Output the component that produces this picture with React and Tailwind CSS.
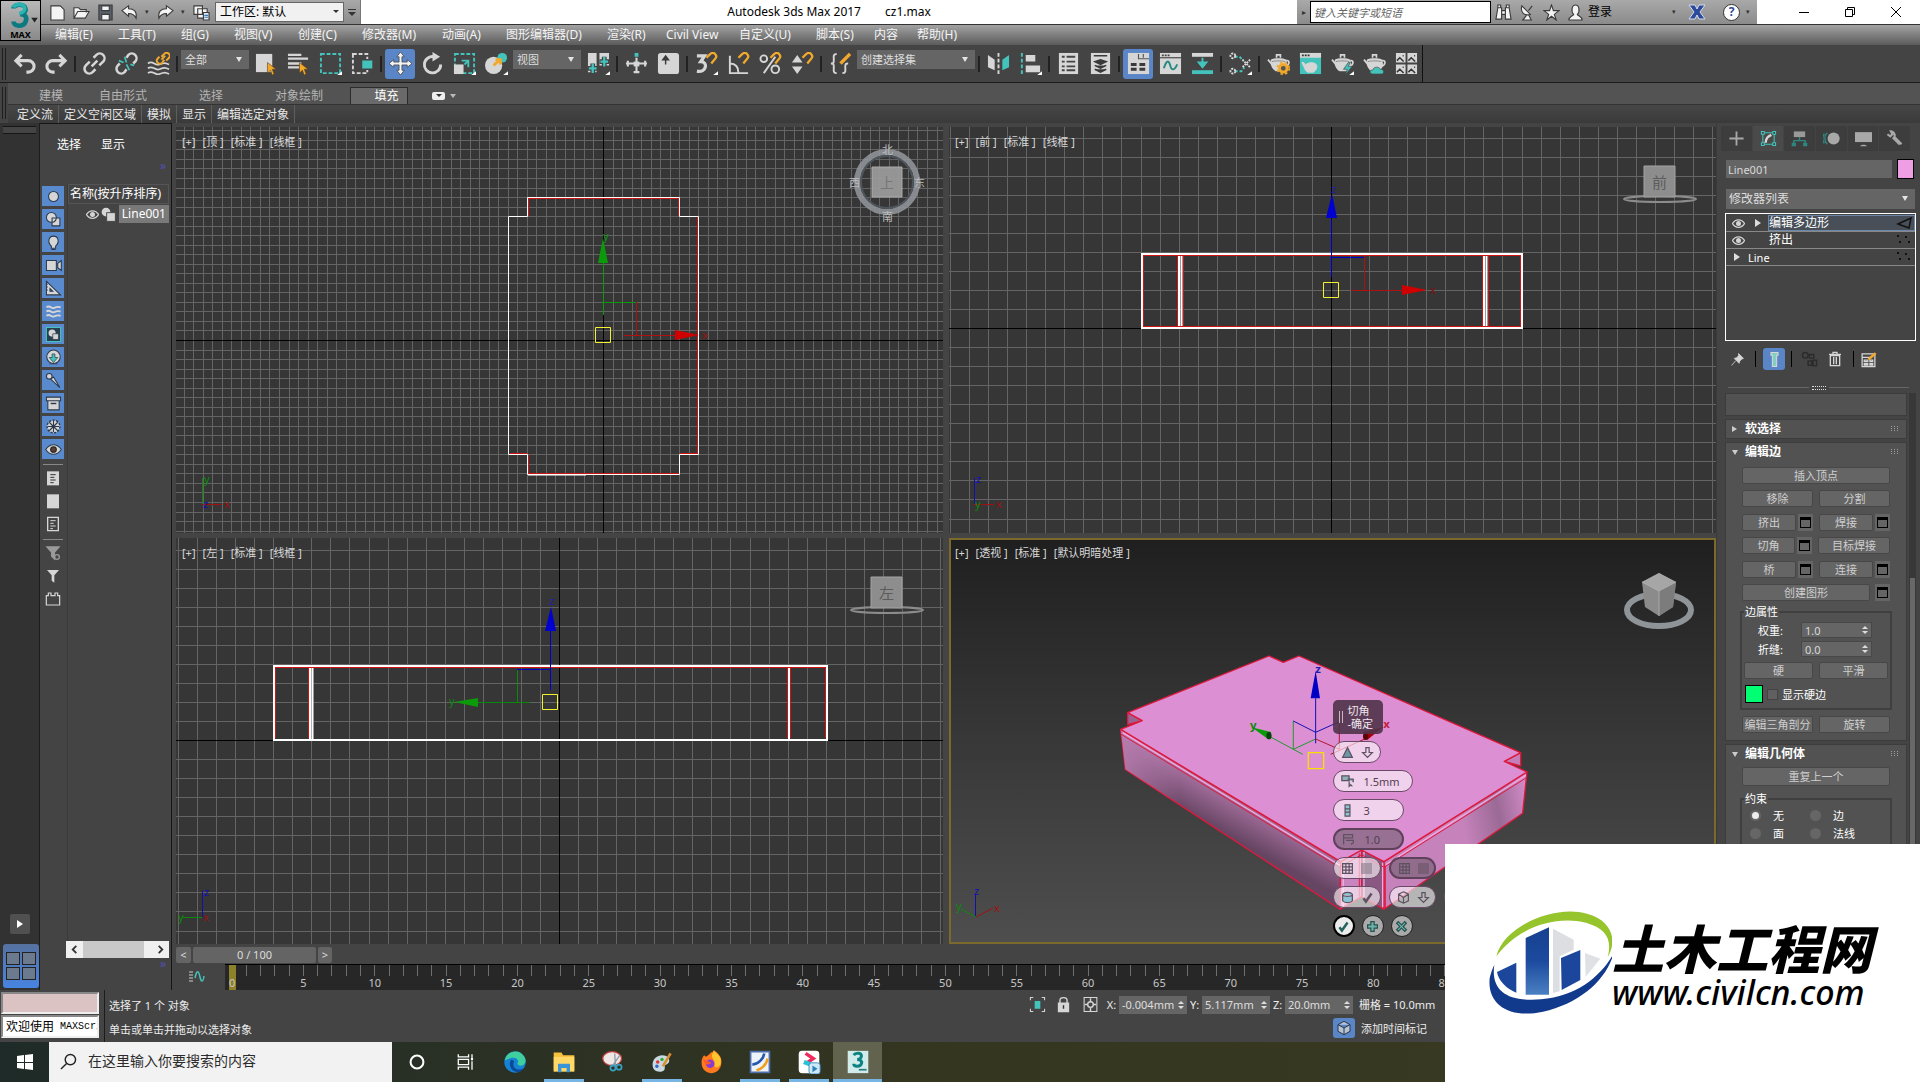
import React from "react";

const L = "#d6d6d6";
const T = "#43c3bb";
const Y = "#f0a92c";

function Ic({ children, className = "size-6" }) {
  return (
    <svg viewBox="0 0 24 24" className={className + " shrink-0"} fill="none" stroke={L} strokeWidth="2" aria-hidden="true">
      {children}
    </svg>
  );
}

const cursor = <path d="M13 11v11l3-3 2 5 2-1-2-5h4z" fill={Y} stroke="#5a3c10" strokeWidth=".6" />;
const teapot = (
  <g>
    <path d="M4 8c3-2 13-2 16 0 2 6 0 10-4 12H9C5 18 3 13 4 8z" fill={L} stroke="none" />
    <path d="M10 6V3h4v3M1 8l5 6M20 9c4-1 4 5-1 6" strokeWidth="1.800" />
    <path d="M5 10c3-1 11-1 14 0" stroke="#777" strokeWidth=".8" />
  </g>
);
const fold = <path d="M24 20v4h-5z" fill="#fff" stroke="none" />;

const toolIcons = {
  undo: <path d="M9 3 3 9l6 6M3 9h13a6 6 0 0 1 0 12h-2" strokeWidth="3.200" />,
  redo: <path d="m15 3 6 6-6 6M21 9H8a6 6 0 0 0 0 12h2" strokeWidth="3.200" />,
  link: <path d="m9 15 6-6M11 6l3-3a4.500 4.500 0 0 1 7 7l-4 4M13 18l-3 3a4.500 4.500 0 0 1-7-7l4-4" strokeWidth="2.600" />,
  unlink: (
    <>
      <path d="M12 6l2-3a4.500 4.500 0 0 1 7 7l-2 2M12 18l-2 3a4.500 4.500 0 0 1-7-7l2-2" strokeWidth="2.600" />
      <path d="m10 5 2 6M12 13l3 6M16 13l4 1M4 9l5 2" stroke={T} strokeWidth="1.800" />
    </>
  ),
  bind: (
    <>
      <path d="M1 12c5-4 7 3 12 1s6-2 10 0M1 17c5-4 7 3 12 1s6-2 10 0M1 22c5-4 7 3 12 1s6-2 10 0" strokeWidth="1.800" />
      <path d="m15 8 4-4M15 5l3-3a3 3 0 0 1 5 4l-3 3M18 8l-2 3a3 3 0 0 1-5-4l2-2" stroke={Y} />
    </>
  ),
  select: (
    <>
      <path d="M1 2h17v19H1z" fill={L} stroke="none" />
      {cursor}
    </>
  ),
  byName: (
    <>
      <path d="M1 3h14M1 7h21M1 12h14M1 16h12" strokeWidth="2.400" />
      {cursor}
    </>
  ),
  rect: (
    <>
      <path d="M2 2h20v20H2z" stroke={T} strokeDasharray="4 2" />
      {fold}
    </>
  ),
  crossing: (
    <>
      <path d="M2 2h15v20H2z" strokeDasharray="4 2" />
      <path d="M11 8h12v10H11z" fill={T} stroke="#444" strokeWidth="1.500" />
    </>
  ),
  move: (
    <g fill="#f2f2f2" stroke="#444" strokeWidth=".8">
      <path d="M12 0l4 5h-2.500v5.500H19V8l5 4-5 4v-2.500h-5.500V19H16l-4 5-4-5h2.500v-5.500H5V16l-5-4 5-4v2.500h5.500V5H8z" />
    </g>
  ),
  rotate: (
    <>
      <path d="M14 5a8.500 8.500 0 1 0 6.500 8" strokeWidth="3" />
      <path d="M12 0v10l8-5z" fill={L} stroke="none" />
    </>
  ),
  scale: (
    <>
      <path d="M2 2h20v20H2z" stroke={T} strokeDasharray="4 2" />
      <path d="M1 13h10v10H1z" fill={L} stroke="none" />
      <path d="M9 9h7v7M16 9l-4 4" stroke={T} />
      {fold}
    </>
  ),
  place: (
    <>
      <circle cx="9" cy="14" r="9" fill={L} stroke="none" />
      <circle cx="18" cy="6" r="5" fill={T} stroke="none" />
      <path d="m9 14 6-6m-4 0h5v5" stroke={Y} strokeWidth="3" />
      {fold}
    </>
  ),
  pivot: (
    <>
      <path d="M1 1h9v20H1zM13 1h10v13H13z" fill={L} stroke="none" />
      <path d="M6 12v11M1 17h10M18 5v11M13 10h10" stroke="#444" strokeWidth="5" />
      <path d="M6 12v10M2 17h8M18 5v10M14 10h8" stroke={T} strokeWidth="2.400" />
      {fold}
    </>
  ),
  manip: (
    <>
      <path d="M12 6v16M1 12h22M3 9v6M21 9v6M9 21h6" strokeWidth="2.200" />
      <path d="M10 1h4v4h-4z" fill={T} stroke="none" />
      <path d="M9 10h6v5H9z" fill={L} stroke="none" />
    </>
  ),
  keyboard: (
    <>
      <rect x="1" y="1" width="22" height="22" rx="3" fill={L} stroke="none" />
      <path d="M9 13V8M6 8h6L9 4z" stroke="#3a3a3a" strokeWidth="1.500" fill="#3a3a3a" />
    </>
  ),
  snap: (
    <>
      <path d="M2 4h8l-4 6c8 0 6 12-4 10" strokeWidth="3.400" />
      <path d="m12 6 4-4c4-3 8 2 5 5l-4 5" stroke={Y} strokeWidth="2.400" />
      {fold}
    </>
  ),
  angle: (
    <>
      <path d="M3 4v18h19M3 12c7 0 9 4 9 10" />
      <path d="m12 6 4-4c4-3 8 2 5 5l-4 5" stroke={Y} strokeWidth="2.400" />
    </>
  ),
  percent: (
    <>
      <circle cx="5" cy="7" r="3.500" />
      <circle cx="17" cy="18" r="4" />
      <path d="M17 5 5 22" />
      <path d="m12 6 4-4c4-3 8 2 5 5l-4 5" stroke={Y} strokeWidth="2.400" />
    </>
  ),
  spinner: (
    <>
      <path d="M1 11h11L6.500 3zM1 15h11l-5.500 8z" fill={L} stroke="none" />
      <path d="m12 6 4-4c4-3 8 2 5 5l-4 5" stroke={Y} strokeWidth="2.400" />
    </>
  ),
  braces: (
    <>
      <path d="M8 2C4 2 5 5 5 8s0 4-3 4c3 0 3 1 3 4s-1 6 3 6M14 22c4 0 3-3 3-6s0-4 3-4" />
      <path d="M12 12 22 2" stroke={Y} strokeWidth="3.500" />
    </>
  ),
  mirror: (
    <>
      <path d="M1 3l7 5v11l-7-3z" fill={L} stroke="none" />
      <path d="M23 3l-7 5v11l7-3z" fill={T} stroke="none" />
      <path d="M12 1v22" strokeDasharray="4 2" />
    </>
  ),
  align: (
    <>
      <path d="M3 1v22" stroke={T} strokeDasharray="4 2" />
      <path d="M7 3h10v7H7zM7 14h15v7H7z" fill={L} stroke="none" />
      {fold}
    </>
  ),
  layers: (
    <>
      <path d="M2 1h20v22H2z" fill={L} stroke="none" />
      <path d="M5 5h3M10 5h9M5 10h3M10 10h9M5 15h3M10 15h9M5 19h3M10 19h9" stroke="#444" />
    </>
  ),
  layerStack: (
    <>
      <path d="M2 1h20v22H2z" fill={L} stroke="none" />
      <path d="M5 4h14M6 10l6-2 6 2-6 3zM6 14l6 3 6-3M6 18l6 3 6-3" stroke="#3a3a3a" fill="#3a3a3a" strokeWidth="1.500" />
    </>
  ),
  ribbon: (
    <>
      <path d="M1 1h22v22H1z" fill={L} stroke="none" />
      <path d="M12 2v5h11M17 2v4" stroke="#555" strokeWidth="1.200" />
      <path d="M4 13h6M13 13h6M4 18h6M13 18h6" stroke="#3a3a3a" strokeWidth="3" />
    </>
  ),
  curve: (
    <>
      <path d="M1 1h22v22H1z" fill={L} stroke="none" />
      <path d="M1 6h22" stroke="#444" strokeWidth="1.200" />
      <path d="M3 3.500h8" stroke="#444" strokeDasharray="2 1" />
      <path d="M5 17c4-12 6-6 7-2s4 5 7-2" stroke="#238a84" />
    </>
  ),
  schematic: (
    <>
      <path d="M1 3h22" strokeWidth="4" />
      <path d="M1 21h22" stroke={T} strokeWidth="4" />
      <path d="M12 6v6M8 11h8l-4 5z" stroke={T} fill={T} />
    </>
  ),
  material: (
    <>
      <path d="M6 5h5l4 4M6 20h7l3-4" stroke={T} strokeDasharray="3 2" />
      <circle cx="4" cy="4" r="2.500" strokeDasharray="2 1" />
      <circle cx="4" cy="20" r="2.500" strokeDasharray="2 1" />
      <path d="m14 8 8 8M22 8l-8 8" strokeDasharray="2 1" />
      {fold}
    </>
  ),
  renderSetup: (
    <>
      {teapot}
      <circle cx="17" cy="17" r="4" stroke={Y} strokeWidth="3" fill="#555" />
      <circle cx="17" cy="17" r="6.200" stroke={Y} strokeWidth="1.800" strokeDasharray="2.500 2.500" />
    </>
  ),
  frame: (
    <>
      <path d="M1 1h22v22H1z" fill={T} stroke="none" />
      <path d="M1 1h22v5H1z" fill={L} stroke="none" />
      <path d="M3 3.500h8" stroke="#333" strokeDasharray="2 1" />
      <path d="M3 11h2l2 3c0-3 9-4 11-1s-1 7-3 8H9c-2-1-3-3-4-6z" fill={L} stroke={L} strokeWidth="1" />
    </>
  ),
  render: (
    <>
      {teapot}
      <path d="m18 11-5 7h4l-2 6 7-9h-4l2-4z" fill={T} stroke="#444" strokeWidth=".7" />
      {fold}
    </>
  ),
  cloud: (
    <>
      {teapot}
      <path d="M10 23c-4 0-3-5 0-4 1-4 7-4 8-1 4-1 5 5 1 5z" fill={T} stroke="#444" strokeWidth=".7" />
    </>
  ),
  gallery: (
    <>
      <path d="M1 1h10v10H1zM13 1h10v10H13zM1 13h10v10H1zM13 13h10v10H13z" fill={L} stroke="none" />
      <path d="m2 9 3-3 4 4M14 9l3-3 4 4M2 21l3-3 4 4M14 21l3-3 4 4M8 4h1M20 4h1M8 16h1M20 16h1" stroke="#333" strokeWidth="1.500" />
    </>
  ),
};

const toolbar = [
  "undo", "redo", "|", "link", "unlink", "bind", "|", { label: "选择过滤器", value: "全部", w: "w-[70px]" },
  "select", "byName", "rect", "crossing", "|", "move", "rotate", "scale", "place",
  { label: "参考坐标系", value: "视图", w: "w-[70px]" }, "pivot", "|", "manip", "keyboard", "|",
  "snap", "angle", "percent", "spinner", "|", "braces", { label: "命名选择集", value: "创建选择集", w: "w-[120px]" }, "|",
  "mirror", "align", "|", "layers", "layerStack", "|", "ribbon", "curve", "schematic", "|", "material", "|",
  "renderSetup", "frame", "render", "cloud", "gallery",
];

function Dropdown({ label, value, className }) {
  return (
    <div className={"relative " + className}>
      <select aria-label={label} className="block h-full w-full appearance-none bg-[#656565] px-1 text-[11px] leading-none text-[#dedede]">
        <option>{value}</option>
      </select>
      <span className="pointer-events-none absolute right-[7px] top-[7px] border-x-[3px] border-t-[5px] border-x-transparent border-t-[#e4e4e4]" />
    </div>
  );
}

function Toolbar() {
  return (
    <div className="flex h-[38px] items-center border-b border-[#1c1c1c] bg-[#444444]">
      <div className="flex h-full items-center border-r border-[#111]">
        <span className="mr-[2px] ml-[2px] h-8 w-[4px] border-x border-[#1f1f1f]" />
        {toolbar.map((t, i) => {
          if (t === "|") return <span key={i} className="mx-[2px] h-4 w-[2px] bg-[#222]" />;
          if (typeof t === "object")
            return (
              <div key={i} className={"flex h-full shrink-0 justify-center px-px pt-[5px] " + t.w}>
                <Dropdown label={t.label} value={t.value} className="h-[19px] w-full" />
              </div>
            );
          const on = t === "move" || t === "ribbon";
          return (
            <button
              key={i}
              aria-label={t}
              aria-pressed={on}
              className={"mx-px flex h-[30px] w-[30px] shrink-0 items-center justify-center rounded-[3px] " + (on ? "bg-[#5a86c8]" : "")}
            >
              <Ic className="size-[23px]">{toolIcons[t]}</Ic>
            </button>
          );
        })}
      </div>
    </div>
  );
}

const menus = [
  ["编辑(E)", "w-[63px]"],
  ["工具(T)", "w-[63px]"],
  ["组(G)", "w-[53px]"],
  ["视图(V)", "w-16"],
  ["创建(C)", "w-16"],
  ["修改器(M)", "w-20"],
  ["动画(A)", "w-16"],
  ["图形编辑器(D)", "w-[101px]"],
  ["渲染(R)", "w-[59px]"],
  ["Civil View", "w-[73px]"],
  ["自定义(U)", "w-[77px]"],
  ["脚本(S)", "w-[58px]"],
  ["内容", "w-[43px]"],
  ["帮助(H)", "w-[58px]"],
];

function QuickIcon({ children, label }) {
  return (
    <button aria-label={label} className="flex w-6 justify-center">
      <svg viewBox="0 0 18 18" className="size-[17px]" fill="#f4f4f4" stroke="#3c3c3c" strokeWidth="1.200">{children}</svg>
    </button>
  );
}

function Header() {
  return (
    <header className="flex h-[45px] bg-white">
      <div className="w-[41px] shrink-0 bg-[#5f5f5f]">
        <button aria-label="应用程序菜单" className="flex h-[41px] w-[41px] flex-col items-center border border-black bg-gradient-to-b from-[#b9b9b9] to-[#8a8a8a]">
          <svg viewBox="0 0 40 30" className="h-[28px] w-[40px]" fill="none" aria-hidden="true">
            <path d="M12 8c0-5 13-6 13 1 0 3-3 5-6 5 5 0 8 3 6 8-2 6-13 6-13 0" stroke="#0c7a80" strokeWidth="5" />
            <path d="M12 7c1-4 12-5 12 1 0 3-3 5-6 5" stroke="#2ab5b4" strokeWidth="4" />
            <path d="M31 18h7l-3.500 5z" fill="#222" />
          </svg>
          <span className="text-[9px] font-bold leading-[11px] text-black">MAX</span>
        </button>
      </div>
      <div className="flex min-w-0 flex-1 flex-col">
        <div className="flex h-6 items-stretch">
          <div className="flex w-[320px] shrink-0 items-center border-r border-[#777] bg-gradient-to-b from-[#a9a9a9] to-[#8b8b8b] pl-1">
            <QuickIcon label="新建"><path d="M2 2h10l4 4v11H2z" /></QuickIcon>
            <QuickIcon label="打开"><path d="M1 15V4h5l2 2h6v3M1 15l4-7h12l-4 7z" /></QuickIcon>
            <QuickIcon label="保存"><path d="M2 1h14v16H2z" fill="#59616b" /><path d="M5 2h8v5H5zM5 11h8v6H5z" /></QuickIcon>
            <QuickIcon label="撤消"><path d="M1 7l7-5v3c6 0 9 3 8 10-2-4-4-5-8-5v3z" /></QuickIcon>
            <span className="w-[12px] text-center text-[7px] text-[#333]">▾</span>
            <QuickIcon label="重做"><path d="M17 7l-7-5v3c-6 0-9 3-8 10 2-4 4-5 8-5v3z" /></QuickIcon>
            <span className="w-[12px] text-center text-[7px] text-[#333]">▾</span>
            <QuickIcon label="项目文件夹"><path d="M1 2h9v9H1zM5 5h10v10H5z" /><path d="M11 9h6v8h-6z" fill="#dfe8f2" /><path d="M12 12h4M12 14h4" stroke="#3a7ab5" /></QuickIcon>
            <div className="relative ml-[2px] h-5 w-[129px]">
              <select aria-label="工作区" className="block h-full w-full appearance-none border border-[#666] bg-[#f1f1f1] px-1 text-xs leading-none text-black">
                <option>工作区: 默认</option>
              </select>
              <span className="pointer-events-none absolute right-[5px] top-2 border-x-[3px] border-t-[3px] border-x-transparent border-t-[#333]" />
            </div>
            <button aria-label="自定义快速访问" className="ml-[4px] flex flex-col items-center gap-[2px]">
              <span className="h-px w-2 bg-[#333]" />
              <span className="border-x-4 border-t-4 border-x-transparent border-t-[#333]" />
            </button>
          </div>
          <h1 className="flex min-w-0 flex-1 items-center justify-center gap-6 text-xs text-black">
            <span>Autodesk 3ds Max 2017</span>
            <span>cz1.max</span>
          </h1>
          <div className="flex w-[460px] shrink-0 items-center bg-gradient-to-b from-[#a9a9a9] to-[#8b8b8b]">
            <span className="w-[13px] text-center text-[8px] text-[#333]">▸</span>
            <input aria-label="搜索" placeholder="键入关键字或短语" className="h-[22px] w-[181px] border border-black bg-white px-[3px] text-[11px] italic leading-none placeholder:text-[#666]" />
            <QuickIcon label="搜索"><path d="M3 4h4v12H1zM11 4h4l2 12h-6zM7 7h4v4H7zM3 1h3v3H3zM12 1h3v3h-3z" /></QuickIcon>
            <QuickIcon label="通信中心"><path d="M3 2c-2 7 3 11 9 9zM10 7l4-5M8 12l-4 5h9l-3-6" /></QuickIcon>
            <QuickIcon label="收藏夹"><path d="m9 1 2 6h6l-5 4 2 6-5-4-5 4 2-6-5-4h6z" /></QuickIcon>
            <button className="flex items-center gap-[4px] pl-[4px] text-xs text-black">
              <svg viewBox="0 0 18 18" className="size-[17px]" fill="#f4f4f4" stroke="#3c3c3c" strokeWidth="1.200" aria-hidden="true"><path d="M2 17c0-4 4-4 5-6-3-3-2-10 2-10s5 7 2 10c1 2 5 2 5 6z" /></svg>
              登录
            </button>
            <span className="ml-[60px] text-[7px] text-[#333]">▾</span>
            <button aria-label="Exchange" className="ml-[11px] w-6">
              <svg viewBox="0 0 20 18" className="h-[18px] w-5" aria-hidden="true"><path d="M2 2h6l2 4 2-4h6l-5 7 5 7h-6l-2-4-2 4H2l5-7z" fill="#2d4a9a" stroke="#d5dcf0" /></svg>
            </button>
            <button aria-label="帮助" className="ml-[12px] flex size-[17px] items-center justify-center rounded-full border border-[#333] bg-white text-[12px] font-bold leading-none text-[#2d4a9a]">?</button>
            <span className="ml-[6px] text-[7px] text-[#333]">▾</span>
          </div>
          <div className="flex w-[163px] shrink-0 items-center justify-between pl-10 pr-[17px]">
            <button aria-label="最小化"><svg viewBox="0 0 14 14" className="size-[14px]"><path d="M2 7.500h10" stroke="#000" /></svg></button>
            <button aria-label="还原"><svg viewBox="0 0 14 14" className="size-[14px]" fill="none" stroke="#000"><path d="M2.500 4.500h7v7h-7zM4.500 4.500v-2h7v7h-2" /></svg></button>
            <button aria-label="关闭"><svg viewBox="0 0 14 14" className="size-[14px]" stroke="#000"><path d="m2 2 10 10M12 2 2 12" /></svg></button>
          </div>
        </div>
        <nav className="flex h-[21px] items-center border-t border-[#333] bg-gradient-to-b from-[#a3a3a3] to-[#5c5c5c] pl-[14px] text-xs text-[#f4f4f4]">
          {menus.map(([m, w]) => (
            <button key={m} className={"shrink-0 whitespace-nowrap text-left leading-none " + w}>{m}</button>
          ))}
        </nav>
      </div>
    </header>
  );
}

function Ribbon() {
  return (
    <div className="flex h-10 bg-[#444]">
      <span className="mx-[2px] my-1 w-[4px] shrink-0 border-x border-[#1f1f1f]" />
      <div className="flex min-w-0 flex-1 flex-col">
        <div role="tablist" className="flex h-[22px] items-stretch border-b border-[#333] bg-[#535353] pt-[4px] text-xs leading-none text-[#b4b4b4]">
          <button role="tab" className="w-[86px]">建模</button>
          <button role="tab" className="w-[58px]">自由形式</button>
          <button role="tab" className="w-[118px]">选择</button>
          <button role="tab" className="w-[58px]">对象绘制</button>
          <span className="w-[22px]" />
          <button role="tab" aria-selected="true" className="w-[58px] whitespace-nowrap border border-b-0 border-[#2c2c2c] bg-[#6a6a6a] pl-[15px] text-white">填充</button>
          <button aria-label="显示面板" className="ml-6 flex items-center gap-[5px]">
            <span className="flex h-[8px] w-[13px] items-center justify-center rounded-[2px] bg-[#eee]"><span className="border-x-[3px] border-t-[3px] border-x-transparent border-t-[#333]" /></span>
            <span className="border-x-[3px] border-t-[4px] border-x-transparent border-t-[#bbb]" />
          </button>
        </div>
        <div className="flex h-[18px] bg-gradient-to-b from-[#474747] to-[#3a3a3a] pl-1 text-xs leading-none text-[#e6e6e6]">
          {["定义流", "定义空闲区域", "模拟", "显示", "编辑选定对象"].map((m) => (
            <button key={m} className="border-r border-[#5e5e5e] px-[5px] pt-[2px]">{m}</button>
          ))}
        </div>
      </div>
    </div>
  );
}

const K = "#2c3a4c";
const explorerIcons = [
  <circle cx="12" cy="12" r="7" fill={L} stroke={K} strokeWidth="1.500" />,
  <g stroke={K} strokeWidth="1.500"><circle cx="9" cy="9" r="7" fill={L} /><path d="M10 10h11v11H10z" fill={L} /><path d="M16 10a7 7 0 0 1-6 6" /></g>,
  <path d="M9 20v-3c-6-5-4-14 3-14s9 9 3 14v3zM9 22h6" fill={L} stroke={K} strokeWidth="1.500" />,
  <path d="M2 5h14v14H2zM18 9l5-4v14l-5-4z" fill={L} stroke={K} strokeWidth="1.500" />,
  <path d="M2 2l20 19H2zM7 12v4h4zM2 6h2M2 10h2M2 14h2" fill={L} fillRule="evenodd" stroke={K} strokeWidth="1.500" />,
  <path d="M2 6c6-4 6 3 11 1s5-2 9-1M2 12c6-4 6 3 11 1s5-2 9-1M2 18c6-4 6 3 11 1s5-2 9-1" stroke={L} strokeWidth="2.600" />,
  <g><path d="M2 2h20v20H2z" fill="#28404e" stroke={T} strokeWidth="1.500" /><circle cx="10" cy="10" r="5" fill={L} stroke="none" /><path d="M11 11h8v8h-8z" fill={L} stroke={K} strokeWidth="1" /></g>,
  <g><circle cx="12" cy="11" r="9.500" fill={L} stroke={K} strokeWidth="1.500" /><path d="M10 7h4v5h4l-6 7-6-7h4zM6 21h12" fill={T} stroke={K} strokeWidth="1" /></g>,
  <g fill={L} stroke={K} strokeWidth="1.500"><path d="m8 10 4-3 9 15z" /><circle cx="6" cy="6" r="4" /></g>,
  <g fill={L} stroke={K} strokeWidth="1.500"><path d="M2 3h20v5H2zM4 8h16v13H4z" /><path d="M8 12h8" strokeWidth="2" /></g>,
  <g stroke={K}><circle cx="12" cy="12" r="9" fill={L} strokeDasharray="3 2" strokeWidth="2" /><path d="M12 4v16M4 12h16M6 6l12 12M18 6 6 18" strokeWidth="1.500" /></g>,
  <g><path d="M1 12c6-9 16-9 22 0-6 9-16 9-22 0z" fill={L} stroke={K} strokeWidth="1.500" /><circle cx="12" cy="12" r="4" fill="#5a4038" stroke="#222" strokeWidth="1.500" /></g>,
];
const explorerTools = [
  <g><path d="M3 2h18v21H3z" fill={L} stroke="none" /><path d="M8 7h8M8 11h6M8 15h8M8 19h5" stroke="#333" strokeWidth="1.500" /></g>,
  <path d="M3 2h18v21H3z" fill={L} stroke="none" />,
  <g><path d="M4 2h16v20H4z" /><path d="M8 7h8M8 11h5M8 15h8M8 19h4" strokeWidth="1.500" /></g>,
];
const explorerFilters = [
  <g stroke="#9a9a9a"><path d="M3 3h18l-7 8v10l-4-4v-6z" fill="#9a9a9a" /><circle cx="18" cy="18" r="3.500" fill="#444" /></g>,
  <path d="M3 3h18l-7 8v11l-4-3v-8z" fill={L} stroke="none" />,
  <path d="M2 7h3V3h4v4h6V3h4v4h3v14H2z" strokeWidth="1.800" />,
];

function Eye({ className = "w-[13px] h-[9px]" }) {
  return (
    <svg viewBox="0 0 26 18" className={className + " shrink-0"} aria-hidden="true">
      <path d="M1 9C7-1 19-1 25 9 19 19 7 19 1 9z" fill="none" stroke="#d4d4d4" strokeWidth="2.500" />
      <circle cx="13" cy="9" r="5" fill="#d4d4d4" />
    </svg>
  );
}

function SceneExplorer() {
  return (
    <aside className="flex w-[132px] shrink-0 flex-col border-r border-t border-[#161616] bg-[#444] text-xs text-white">
      <div className="flex h-[42px] items-center gap-5 pl-[17px]">
        <button>选择</button>
        <button>显示</button>
      </div>
      <button aria-label="更多" className="-mt-[8px] h-4 self-end pr-[5px] text-xs leading-none text-[#5350b8]">»</button>
      <div className="mt-[10px] flex min-h-0 flex-1 gap-[2px]">
        <div className="ml-px flex w-6 shrink-0 flex-col items-center gap-[3px] pt-[2px]">
          {explorerIcons.map((g, i) => (
            <button key={i} aria-label={"显示类型 " + (i + 1)} className="flex h-5 w-[22px] items-center justify-center bg-[#5a8ace]"><Ic className="size-[17px]">{g}</Ic></button>
          ))}
          <span className="mt-[2px] h-px w-5 bg-[#888]" />
          {explorerTools.map((g, i) => (
            <button key={i} aria-label={"选择工具 " + (i + 1)} className="flex h-5 w-[22px] items-center justify-center"><Ic className="size-4">{g}</Ic></button>
          ))}
          <span className="mt-[2px] h-px w-5 bg-[#888]" />
          {explorerFilters.map((g, i) => (
            <button key={i} aria-label={"过滤器 " + (i + 1)} className="flex h-5 w-[22px] items-center justify-center"><Ic className="size-4">{g}</Ic></button>
          ))}
        </div>
        <div className="mr-[2px] flex min-w-0 flex-1 flex-col border-l border-[#3a3a3a]">
          <button className="h-5 truncate border border-[#555] pl-px text-left text-xs leading-none">名称(按升序排序)</button>
          <div className="mt-px flex h-[18px] items-center justify-end gap-[2px]">
            <Eye />
            <Ic className="size-[15px]"><circle cx="8" cy="8" r="7" fill={L} stroke="none" /><path d="M9 9h14v14H9z" fill={L} stroke="#444" strokeWidth="1.500" /></Ic>
            <button className="ml-px h-[18px] bg-[#797979] px-[3px] text-xs leading-none">Line001</button>
          </div>
        </div>
      </div>
      <div className="ml-[26px] mr-[2px] flex h-[17px] items-stretch justify-between bg-[#f0f0f0]">
        <button aria-label="向左滚动" className="w-[17px]"><svg viewBox="0 0 10 10" className="mx-auto size-[9px]" fill="none" stroke="#333" strokeWidth="2"><path d="M7 1 3 5l4 4" /></svg></button>
        <span className="mr-[8px] flex-1 bg-[#c9c9c9]" />
        <button aria-label="向右滚动" className="w-[17px]"><svg viewBox="0 0 10 10" className="mx-auto size-[9px]" fill="none" stroke="#333" strokeWidth="2"><path d="m3 1 4 4-4 4" /></svg></button>
      </div>
      <button aria-label="更多" className="mb-5 h-3 self-end pr-[5px] text-xs leading-none text-[#5350b8]">»</button>
    </aside>
  );
}

/* Grid lines spread outwards from the two world axes. */
function Grid({ ax, ay, step }) {
  const xs = [];
  const ys = [];
  for (let k = -90; k <= 90; k++) {
    const x = Math.round(ax + k * step);
    const y = Math.round(ay + k * step);
    if (k !== 0 && x > 0 && x < 767) xs.push(x);
    if (k !== 0 && y > 0 && y < 406) ys.push(y);
  }
  return (
    <g strokeWidth="1">
      <path stroke="#646464" d={xs.map((x) => `M${x + 0.5} 0V406`).join("") + ys.map((y) => `M0 ${y + 0.5}H767`).join("")} />
      <path stroke="#000" d={`M${ax + 0.5} 0V406M0 ${ay + 0.5}H767`} />
    </g>
  );
}

function Tripod({ x, y, up, upColor, side, sideColor, dir = 1, o, oColor }) {
  return (
    <g fontSize="11" fontFamily="Noto Sans" strokeWidth="1">
      <path d={`M${x + 0.5} ${y}V${y - 26}`} stroke={upColor} />
      <path d={`M${x} ${y + 0.5}H${x + dir * 20}`} stroke={sideColor} />
      <text x={x + 2} y={y - 21} fill={upColor}>{up}</text>
      <text x={x + (dir > 0 ? 22 : -24)} y={y + 4} fill={sideColor}>{side}</text>
      <text x={x + 1} y={y + 4} fill={oColor}>{o}</text>
    </g>
  );
}

function Viewport({ name, shade, active, children }) {
  return (
    <section className="relative min-h-0 min-w-0 overflow-hidden bg-[#363636]">
      <svg viewBox="0 0 767 406" preserveAspectRatio="xMidYMid slice" className="block h-full w-full" fill="none" aria-label={name}>{children}</svg>
      <div className="absolute left-[6px] top-[9px] flex gap-[7px] text-[11px] leading-none text-[#d8d8d8]">
        <button>[+]</button>
        <button>[{name} ]</button>
        <button>[标准 ]</button>
        <button>[{shade} ]</button>
      </div>
      {active}
    </section>
  );
}

function FlatCube({ label }) {
  return (
    <g>
      <ellipse cx="711" cy="72" rx="36" ry="3" stroke="#8c8c8c" strokeWidth="2" />
      <path d="M695 39h31v31h-31z" fill="#8d8d8d" stroke="#a4a4a4" />
      <text x="703" y="61" fontSize="15" fill="#5c5c5c" fontFamily="Noto Sans CJK SC">{label}</text>
    </g>
  );
}

const RED = "#d01414";

function TopView() {
  const d = "M351.500 70.500H503.500V89.500H522.500V327.500H503.500V347.500H351.500V327.500H332.500V89.500H351.500Z";
  return (
    <Viewport name="顶" shade="线框">
      <Grid ax={427} ay={213} step={9.53} />
      <path d={d} stroke="#fff" />
      <path d="M352 71.500H503M521.500 90V327M352 346.500H503M352.500 72V89M502.500 72V89M334 326.500H351M504 326.500H521M352.500 328V346" stroke={RED} />
      <path d="M352 348H410" stroke="#fff" />
      <path d="M427.500 188V136M427.500 175.500H460" stroke="#0a9a0a" />
      <path d="M422 136h10l-5-25z" fill="#0a9a0a" />
      <path d="M460.500 175V208M448 208.500H500" stroke="#b01010" />
      <path d="M499 203v10l24-5z" fill="#d00000" />
      <path d="M419.500 200.500h15v15h-15z" stroke="#f2f230" />
      <text x="427" y="113" fontSize="11" fill="#0a9a0a" fontFamily="Noto Sans">y</text>
      <text x="526" y="212" fontSize="11" fill="#a01010" fontFamily="Noto Sans">x</text>
      <circle cx="711" cy="55" r="30" stroke="#8f9498" strokeWidth="6" opacity=".9" />
      <circle cx="711" cy="55" r="26" stroke="#4e555c" strokeWidth="2" />
      <path d="M696 40h30v30h-30z" fill="#9a9a9a" stroke="#b0b0b0" opacity=".95" />
      <g fontFamily="Noto Sans CJK SC" fill="#bcbcbc" fontSize="11">
        <text x="704" y="61" fontSize="14" fill="#777">上</text>
        <text x="706" y="27">北</text>
        <text x="706" y="94">南</text>
        <text x="673" y="60">西</text>
        <text x="738" y="60">东</text>
      </g>
      <Tripod x={26} y={377} up="y" upColor="#0a8a0a" side="x" sideColor="#a01010" o="z" oColor="#1010b0" />
    </Viewport>
  );
}

function FrontView() {
  return (
    <Viewport name="前" shade="线框">
      <Grid ax={382} ay={201} step={19.05} />
      <path d="M193 127H573V201H193Z" stroke="#fff" strokeWidth="2" />
      <path d="M230 127V201M232.500 127V201M535 127V201M537.500 127V201" stroke="#fff" strokeWidth="2" />
      <path d="M194 128.500H572M194 199.500H572M194.500 128V200M571.500 128V200M228.500 128V200M234.500 128V200M533.500 128V200M539.500 128V200" stroke={RED} />
      <path d="M382.500 150V92M382 130.500H415" stroke="#0000c8" />
      <path d="M377 91h11l-5-24z" fill="#0000d0" />
      <text x="382" y="66" fontSize="11" fill="#2020b0" fontFamily="Noto Sans">z</text>
      <path d="M415.500 130V163M402 163.500H455" stroke="#b01010" />
      <path d="M453 158v10l25-5z" fill="#d00000" />
      <text x="481" y="167" fontSize="11" fill="#801010" fontFamily="Noto Sans">x</text>
      <path d="M374.500 155.500h15v15h-15z" stroke="#f2f230" />
      <FlatCube label="前" />
      <Tripod x={25} y={377} up="z" upColor="#1010b0" side="x" sideColor="#a01010" o="y" oColor="#0a8a0a" />
    </Viewport>
  );
}

function LeftView() {
  return (
    <Viewport name="左" shade="线框">
      <Grid ax={383} ay={202} step={19.05} />
      <path d="M98 128H651V202H98Z" stroke="#fff" strokeWidth="2" />
      <path d="M134 128V202M136.500 128V202M613 128V202" stroke="#fff" strokeWidth="2" />
      <path d="M100 129.500H649M99.500 129V200M649.500 129V200M132.500 129V200M611.500 129V200M614.500 129V200" stroke={RED} />
      <path d="M374.500 152V93M341 131.500H374" stroke="#0000c8" />
      <path d="M369 93h11l-5-24z" fill="#0000d0" />
      <text x="373" y="67" fontSize="11" fill="#2020b0" fontFamily="Noto Sans">z</text>
      <path d="M341.500 132V164M354 164.500H300" stroke="#0a8a0a" />
      <path d="M302 160v9l-24-5z" fill="#0a9a0a" />
      <text x="273" y="167" fontSize="11" fill="#0a8a0a" fontFamily="Noto Sans">y</text>
      <path d="M366.500 156.500h15v15h-15z" stroke="#f2f230" />
      <FlatCube label="左" />
      <Tripod x={26} y={379} up="z" upColor="#1010b0" side="y" sideColor="#0a8a0a" dir={-1} o="x" oColor="#a01010" />
    </Viewport>
  );
}

function Pill({ w, dark, children }) {
  return (
    <button className={"flex h-[22px] items-center gap-[10px] rounded-full pl-[7px] text-[11px] leading-none " + w + (dark ? " border-2 border-[#5b3c56]/90 bg-[#7b6278]/70 text-[#54404f]" : " border border-[#6a4a66] bg-white/60 text-[#54404f]")}>
      {children}
    </button>
  );
}

function G({ children }) {
  return <svg viewBox="0 0 16 16" className="size-[13px] shrink-0" fill="none" stroke="#5d5260" strokeWidth="1.500" aria-hidden="true">{children}</svg>;
}

const downArrow = <G><path d="M6 2h4v6h4l-6 6-6-6h4z" /></G>;
const gridGlyph = <G><path d="M2 2h12v12H2zM2 6h12M2 10h12M6 2v12M10 2v12" /></G>;

function Caddy() {
  return (
    <div className="absolute left-1/2 top-[162px] flex flex-col gap-[7px]">
      <div className="flex h-[34px] w-[50px] items-center gap-[5px] rounded-[5px] bg-[#4f3349]/90 pl-[6px] text-[11px] leading-[13px] text-[#f0e6ee]">
        <span className="h-3 w-[4px] border-x border-[#c7b6c4]" />
        <span>切角<br />-确定</span>
      </div>
      <Pill w="w-[48px]">
        <span className="flex gap-[7px]"><G><path d="M8 2l6 12H2z" fill="#6d97a8" /></G>{downArrow}</span>
      </Pill>
      <Pill w="w-[80px]"><G><path d="M1 1h9v6H1zM8 5h7v4M10 8v6l2-2 2 2" fill="#8fb0bb" /></G>1.5mm</Pill>
      <Pill w="w-[71px]"><G><path d="M5 1h6v14H5zM5 6h6M5 10h6" fill="#8cc6d6" /></G>3</Pill>
      <Pill w="w-[71px]" dark><G><path d="M2 2h11v4H2zM2 6v8M5 9h9v3l-3 2" /></G>1.0</Pill>
      <div className="flex gap-[8px]">
        <Pill w="w-[48px]"><span className="flex items-center gap-[7px]">{gridGlyph}<span className="size-[11px] bg-[#8a7c88]/60" /></span></Pill>
        <Pill w="w-[47px]" dark><span className="flex items-center gap-[7px]">{gridGlyph}<span className="size-[11px] bg-[#6a5568]/60" /></span></Pill>
      </div>
      <div className="flex gap-[8px]">
        <Pill w="w-[48px]"><span className="flex gap-[7px]"><G><path d="M2 4c2-3 10-3 12 0v8c-2 3-10 3-12 0zM2 5c2 2 10 2 12 0" fill="#8cc6d6" /></G><G><path d="m3 9 3 4 7-10" strokeWidth="3" /></G></span></Pill>
        <Pill w="w-[47px]"><span className="flex gap-[7px]"><G><path d="M8 1l6 3v8l-6 3-6-3V4zM2 4l6 4 6-4M8 8v7" /></G>{downArrow}</span></Pill>
        <Pill w="w-[48px]" />
      </div>
      <div className="flex gap-[7px]">
        <button aria-label="确定" className="flex size-[22px] items-center justify-center rounded-full border-2 border-black bg-[#ececec]"><G><path d="m3 9 3 4 7-10" stroke="#24635c" strokeWidth="3" /></G></button>
        <button aria-label="应用并继续" className="flex size-[22px] items-center justify-center rounded-full border border-[#222] bg-[#aaa]"><G><path d="M6 2h4v4h4v4h-4v4H6v-4H2V6h4z" stroke="#27524e" fill="#6fb5ae" /></G></button>
        <button aria-label="取消" className="flex size-[22px] items-center justify-center rounded-full border border-[#222] bg-[#aaa]"><G><path d="M2 4l2-2 4 4 4-4 2 2-4 4 4 4-2 2-4-4-4 4-2-2 4-4z" stroke="#27524e" fill="#6fb5ae" /></G></button>
      </div>
    </div>
  );
}

function PerspectiveView() {
  return (
    <Viewport
      name="透视"
      shade="默认明暗处理"
      active={
        <>
          <div className="pointer-events-none absolute inset-0 border-2 border-[#7b6a2c]" />
          <Caddy />
        </>
      }
    >
      <defs>
        <linearGradient id="sky" x2="0" y2="1"><stop stopColor="#201f1f" /><stop offset=".5" stopColor="#383838" /><stop offset="1" stopColor="#4e4e4e" /></linearGradient>
        <linearGradient id="sideL" gradientUnits="userSpaceOnUse" x1="440" y1="500" x2="380" y2="610"><stop stopColor="#b077a8" /><stop offset="1" stopColor="#664563" /></linearGradient>
        <linearGradient id="sideEdge" gradientUnits="userSpaceOnUse" x1="120" y1="0" x2="300" y2="0"><stop stopColor="#b87db0" stopOpacity=".9" /><stop offset="1" stopColor="#b87db0" stopOpacity="0" /></linearGradient>
        <linearGradient id="sideR" x1="0" y1=".2" x2="1" y2="0"><stop stopColor="#c582bb" /><stop offset=".5" stopColor="#c582bb" /><stop offset=".75" stopColor="#9b6a95" /><stop offset="1" stopColor="#d88fce" /></linearGradient>
      </defs>
      <path d="M0 0h767v406H0z" fill="url(#sky)" />
      <g transform="translate(131 82) scale(.3333)" strokeWidth="4" strokeLinejoin="round">
        <g stroke="#e0183c">
          <path d="M143 278v36l44-12z" fill="#9a6492" />
          <path d="M1322 398v40l-49-14z" fill="#c47fba" />
          <path d="M122 328 782 725 780 868 136 448z" fill="url(#sideL)" />
          <path d="M122 328 782 725 780 868 136 448z" fill="url(#sideEdge)" stroke="none" />
          <path d="M912 725 1341 456 1328 580 912 868z" fill="url(#sideR)" />
          <path d="M782 725 845 690V830L780 868z" fill="#c985bf" />
          <path d="M845 690 912 725V868L845 830z" fill="#8a5882" />
          <path d="M567 108 610 127 657 108 1322 398 1273 424 1341 456 912 725 845 690 782 725 122 328 187 302 143 278z" fill="#dd8fd3" />
          <path d="M128 338 780 736M790 728V862M908 728V862M918 734 1338 466M852 696V832" stroke="#f2aadf" />
          <path d="M122 342 778 742 845 704 912 742 1338 474M838 700V830M916 740V866" strokeWidth="3" />
        </g>
        <path d="M668 403 570 350M640 303V388L707 357" stroke="#1e9a2a" strokeWidth="3" />
        <path d="M640 303 707 337 778 305M707 370V235" stroke="#1010b4" strokeWidth="3" />
        <path d="M707 357 778 388V305M752 403 870 350" stroke="#b4142c" strokeWidth="3" />
        <path d="M692 235h28l-13-82z" fill="#0000c4" />
        <path d="M573 336 565 358 515 322z" fill="#0a9a0a" />
        <ellipse cx="567" cy="347" rx="8" ry="11" fill="#06420a" />
        <path d="M850 336 862 360 908 322z" fill="#a80008" />
        <ellipse cx="857" cy="349" rx="8" ry="11" fill="#5a0408" />
        <path d="M685 398h46v48h-46z" stroke="#f5e000" />
        <g fontFamily="Noto Sans" fontSize="34" fontWeight="700">
          <text x="706" y="158" fill="#2020b0">z</text>
          <text x="510" y="326" fill="#0a8a0a">y</text>
          <text x="910" y="324" fill="#c02040">x</text>
        </g>
      </g>
      <ellipse cx="710" cy="72" rx="32" ry="16" stroke="#8f9498" strokeWidth="6" />
      <path d="M710 35 727 44 724 69 710 78 696 69 693 44z" fill="#8b8b8b" />
      <path d="M710 35 727 44 710 53 693 44z" fill="#a6a6a6" />
      <path d="M710 53 727 44 724 69 710 78z" fill="#7c7c7c" />
      <path d="M693 44 710 53 727 44M710 53V78" stroke="#b4b4b4" strokeWidth=".8" />
      <path d="M26.500 379V356" stroke="#1010b0" />
      <path d="M27 379 44 370" stroke="#a01010" />
      <path d="M27 379 12 371" stroke="#0a8a0a" />
      <g fontFamily="Noto Sans" fontSize="11"><text x="25" y="357" fill="#1010b0">z</text><text x="45" y="374" fill="#a01010">x</text><text x="7" y="372" fill="#0a8a0a">y</text></g>
    </Viewport>
  );
}

function TimeControls() {
  return (
    <>
      <div className="flex h-[19px] items-center gap-[2px] pl-1 text-[11px] text-[#dcdcdc]">
        <button className="h-4 w-[15px] rounded-[2px] bg-[#646464] leading-none">&lt;</button>
        <button className="h-4 w-[123px] rounded-[2px] bg-[#646464] leading-none">0 / 100</button>
        <button className="h-4 w-[14px] rounded-[2px] bg-[#646464] leading-none">&gt;</button>
      </div>
      <div className="flex h-[26px]">
        <button aria-label="迷你曲线编辑器" className="flex w-[53px] shrink-0 items-center justify-center pr-[3px]">
          <svg viewBox="0 0 18 14" className="h-[14px] w-[18px]" fill="none"><path d="M1 2h4M1 5h4M1 8h4M1 11h4" stroke="#ccc" /><path d="M7 8c2-10 4-6 5-1s3 6 4-1" stroke={T} strokeWidth="1.500" /></svg>
        </button>
        <div className="mr-[50px] flex min-w-0 flex-1 border-t border-black bg-[#272727] text-[11px] text-[#c8c8c8]">
          {Array.from({ length: 101 }, (_, i) => (
            <div key={i} className="flex min-w-0 flex-1 basis-0 flex-col items-center">
              {i === 0 ? (
                <span className="flex h-[25px] w-[7px] items-end justify-center bg-[#8d8229] leading-[14px]">0</span>
              ) : (
                <>
                  <span className="h-[11px] w-px shrink-0 bg-[#6e6e6e]" />
                  {i % 5 === 0 && i < 90 && <span className="leading-[14px]">{i}</span>}
                </>
              )}
            </div>
          ))}
        </div>
      </div>
    </>
  );
}

const panelTabs = [
  <path d="M12 2v20M2 12h20" strokeWidth="2.600" stroke="#a8a8a8" />,
  <g><path d="M4 4h16v16H4z" stroke={T} strokeWidth="1.500" /><path d="M2 2h4v4H2zM18 2h4v4h-4zM2 18h4v4H2zM18 18h4v4h-4z" fill="#444" stroke={T} strokeWidth="1.500" /><path d="M8 18c0-7 4-9 8-11" strokeWidth="3.500" /></g>,
  <g><path d="M4 2h16v8H4z" fill="#999" stroke="none" /><path d="M12 10v5M4 19v-4h16v4" stroke="#2d8680" /><path d="M1 18h6v5H1zM17 18h6v5h-6z" fill="#2d8680" stroke="none" /></g>,
  <g><circle cx="15" cy="12" r="8.500" fill="#a8a8a8" stroke="none" /><path d="M6 4a11 11 0 0 0 0 16M2 5a12 12 0 0 0 0 14" stroke="#2d8680" /></g>,
  <g fill="#a8a8a8" stroke="none"><path d="M0 3h24v14H0z" /><path d="M7 23c1-3 9-3 10 0z" /></g>,
  <g stroke="#a8a8a8"><path d="M2 6l4 3 3-3-2-4a6 6 0 0 1 5 8l10 10" strokeWidth="3" /><path d="M10 10l10 10" strokeWidth="4.500" /></g>,
];

function Btn({ children, className = "h-[17px] flex-1" }) {
  return <button className={"min-w-0 whitespace-nowrap rounded-[2px] border border-[#474747] bg-[#656565] text-[11px] leading-none text-[#cfcfcf] " + className}>{children}</button>;
}

function Sq({ label }) {
  return (
    <button aria-label={label} className="ml-[2px] flex h-[17px] w-[15px] shrink-0 items-center justify-center bg-[#656565]">
      <span className="h-[11px] w-[11px] border border-t-[3px] border-black" />
    </button>
  );
}

function Half({ children }) {
  return <div className="flex min-w-0 flex-1">{children}</div>;
}

function SpinArrows() {
  return (
    <span className="flex flex-col gap-[2px]" aria-hidden="true">
      <span className="border-x-[3px] border-b-[3px] border-x-transparent border-b-[#ddd]" />
      <span className="border-x-[3px] border-t-[3px] border-x-transparent border-t-[#ddd]" />
    </span>
  );
}

function Spinner({ label, value, id }) {
  return (
    <div className="mb-[3px] flex h-4 items-center pl-[14px] text-[11px] text-white">
      <label htmlFor={id} className="w-[43px] leading-none">{label}</label>
      <span className="flex h-4 w-[71px] items-center border border-[#484848] bg-[#656565] pr-[3px]">
        <input id={id} defaultValue={value} className="min-w-0 flex-1 bg-transparent px-[3px] text-[11px] leading-none text-[#d8d8d8]" />
        <SpinArrows />
      </span>
    </div>
  );
}

function Grip() {
  return (
    <svg viewBox="0 0 8 6" className="ml-auto mr-[7px] h-[6px] w-2" fill="#a0a0a0" aria-hidden="true">
      <path d="M0 0h1v1H0zM3 0h1v1H3zM6 0h1v1H6zM0 2h1v1H0zM3 2h1v1H3zM6 2h1v1H6zM0 4h1v1H0zM3 4h1v1H3zM6 4h1v1H6z" />
    </svg>
  );
}

function Rollout({ title, open, children }) {
  return (
    <section className="shrink-0 border border-[#3c3c3c] bg-[#525252]">
      <button aria-expanded={!!open} className="flex h-[18px] w-full items-center pl-[6px] text-left text-xs font-bold leading-none text-white">
        {open ? (
          <span className="mr-[7px] border-x-[3px] border-t-[5px] border-x-transparent border-t-[#ccc]" />
        ) : (
          <span className="mr-[8px] border-y-[3px] border-l-[5px] border-y-transparent border-l-[#ccc]" />
        )}
        {title}
        <Grip />
      </button>
      {children}
    </section>
  );
}

function Radio({ label, checked }) {
  return (
    <label className="flex w-[60px] items-center gap-[12px] leading-none">
      <input type="radio" name="constraint" defaultChecked={checked} className="size-[11px] appearance-none rounded-full border-2 border-[#666] bg-[#666] checked:bg-[#eee]" />
      {label}
    </label>
  );
}

const dots = <svg viewBox="0 0 16 10" className="ml-auto mr-[4px] h-[10px] w-4" fill="#111" aria-hidden="true"><path d="M2 0h2v2H2zM10 1h2v2h-2zM4 6h2v2H4zM13 6h2v2h-2z" /></svg>;

function CommandPanel() {
  return (
    <aside className="flex w-[204px] shrink-0 flex-col overflow-hidden border-l border-[#3a3a3a] bg-[#444] pt-[3px] text-[11px]">
      <div role="tablist" className="flex h-[25px] shrink-0 justify-between pl-[4px] pr-[9px]">
        {panelTabs.map((g, i) => (
          <button key={i} role="tab" aria-label={"面板 " + (i + 1)} aria-selected={i === 1} className={"mr-px flex flex-1 items-center justify-center " + (i === 1 ? "bg-[#4a4a4a]" : "bg-[#3d3d3d]")}><Ic className="size-[17px]">{g}</Ic></button>
        ))}
      </div>
      <div className="mt-2 flex h-5 shrink-0 items-center pl-[9px] pr-[6px]">
        <input aria-label="对象名称" defaultValue="Line001" className="h-[18px] min-w-0 flex-1 bg-[#656565] px-[2px] text-[11px] text-[#d8d8d8]" />
        <button aria-label="对象颜色" className="ml-[5px] h-5 w-[17px] border border-black bg-[#ef9ee4]" />
      </div>
      <Dropdown label="修改器列表" value="修改器列表" className="ml-[9px] mr-[5px] mt-[10px] h-5 shrink-0 [&>select]:px-[3px] [&>select]:text-xs" />
      <div className="ml-[8px] mr-[4px] mt-[4px] h-[128px] shrink-0 border border-white pt-px text-xs leading-none text-white">
        <button className="flex h-[17px] w-full items-center border-b border-[#888] pl-[6px]">
          <Eye /><span className="ml-[10px] mr-[7px] border-y-4 border-l-[6px] border-y-transparent border-l-[#ddd]" />
          <span className="flex h-4 flex-1 items-center border border-[#6d87a8] bg-[#484f58]">编辑多边形
            <svg viewBox="0 0 16 12" className="ml-auto mr-[2px] h-3 w-4" fill="none" stroke="#111" strokeWidth="1.500"><path d="m2 7 13-6-2 10zM2 7l11 4" /></svg>
          </span>
        </button>
        <button className="flex h-[17px] w-full items-center border-b border-[#888] pl-[6px]"><Eye /><span className="ml-6">挤出</span>{dots}</button>
        <button className="flex h-[17px] w-full items-center border-b border-[#888] pl-[8px] text-[11px]"><span className="mr-[8px] border-y-4 border-l-[6px] border-y-transparent border-l-[#ddd]" />Line{dots}</button>
      </div>
      <div className="mt-[6px] flex h-6 shrink-0 items-center pl-[9px]">
        <button aria-label="锁定堆栈" className="w-[22px]"><Ic className="mx-auto size-[13px]"><path d="M14 1l9 9-3 1-4 4-1 4-9-9 4-1 4-4zM9 14 1 23" fill={L} strokeWidth="1.500" /></Ic></button>
        <span className="mx-[7px] h-4 w-px bg-black" />
        <button aria-label="显示最终结果" className="flex h-[22px] w-[22px] items-center justify-center rounded-[3px] bg-[#5a86c8]"><Ic className="size-[17px]"><path d="M7 2h10v4h-2v16H9V6H7z" fill="#7fd0c0" strokeWidth="1.500" /></Ic></button>
        <span className="mx-[6px] h-4 w-px bg-black" />
        <button aria-label="使唯一" className="ml-[3px] w-[22px]"><Ic className="size-[17px]"><g stroke="#2b2b2b"><circle cx="6" cy="6" r="4" /><path d="M12 5h6v5h-6zM10 14h5v6h-5zM17 13h5v8h-5z" /></g></Ic></button>
        <button aria-label="删除修改器" className="w-6"><Ic className="mx-auto size-[16px]"><path d="M3 5h18M9 4V2h6v2M5 7h14v15H5zM10 9v11M14 9v11" strokeWidth="2" /></Ic></button>
        <span className="mx-[6px] h-4 w-px bg-black" />
        <button aria-label="配置修改器集"><Ic className="size-[17px]"><path d="M3 4h18v18H3zM3 9h12M6 13h5v2H6zM14 13h4v2h-4zM6 18h5v2H6zM14 18h4v2h-4z" strokeWidth="1.800" /><path d="m12 12 10-9" stroke={Y} strokeWidth="3.500" /></Ic></button>
      </div>
      <div className="mb-[3px] mt-[14px] flex h-[5px] shrink-0 items-center gap-[3px] px-[11px]">
        <span className="h-px flex-1 bg-[#666]" /><span className="h-[4px] w-[14px] border-y border-dotted border-[#ddd]" /><span className="h-px flex-1 bg-[#666]" />
      </div>
      <div className="flex min-h-0 flex-1 gap-[2px] pl-[8px] pr-[4px]">
        <div className="flex min-w-0 flex-1 flex-col gap-[3px] overflow-hidden">
          <div className="h-[23px] shrink-0 border border-[#3c3c3c] bg-[#525252]" />
          <Rollout title="软选择" />
          <Rollout title="编辑边" open>
            <div className="flex flex-col gap-[6px] px-4 pb-[7px] pt-[6px]">
              <div className="flex"><Btn>插入顶点</Btn></div>
              <div className="flex gap-[6px]"><Btn>移除</Btn><Btn>分割</Btn></div>
              <div className="mt-px flex gap-[6px]"><Half><Btn>挤出</Btn><Sq label="挤出设置" /></Half><Half><Btn>焊接</Btn><Sq label="焊接设置" /></Half></div>
              <div className="flex gap-[6px]"><Half><Btn>切角</Btn><Sq label="切角设置" /></Half><Btn>目标焊接</Btn></div>
              <div className="mt-px flex gap-[6px]"><Half><Btn>桥</Btn><Sq label="桥设置" /></Half><Half><Btn>连接</Btn><Sq label="连接设置" /></Half></div>
              <div className="flex gap-[3px]"><Btn>创建图形</Btn><Sq label="创建图形设置" /></div>
              <fieldset className="-mx-[2px] -mt-[2px] border-2 border-[#3f3f3f] px-[2px] pb-[5px] text-white">
                <legend className="px-px leading-[14px]">边属性</legend>
                <div className="mt-[3px]" />
                <Spinner id="weight" label="权重:" value="1.0" />
                <Spinner id="crease" label="折缝:" value="0.0" />
                <div className="mt-[5px] flex gap-[6px]"><Btn>硬</Btn><Btn>平滑</Btn></div>
                <label className="mt-[6px] flex items-center leading-none">
                  <span className="ml-px mr-[4px] h-[18px] w-[18px] border border-black bg-[#00ff72]" />
                  <input type="checkbox" className="mr-[4px] size-[11px] appearance-none border border-[#444] bg-[#606060]" />
                  显示硬边
                </label>
              </fieldset>
              <div className="flex gap-[6px]"><Btn className="h-[17px] w-[71px]">编辑三角剖分</Btn><Btn>旋转</Btn></div>
            </div>
          </Rollout>
          <Rollout title="编辑几何体" open>
            <div className="flex flex-col gap-[6px] px-4 pb-[8px] pt-[4px]">
              <div className="flex"><Btn className="h-[19px] flex-1">重复上一个</Btn></div>
              <fieldset className="-mx-[2px] border-2 border-[#3f3f3f] px-[8px] pb-[6px] text-white">
                <legend className="-ml-[6px] px-px leading-[14px]">约束</legend>
                <div className="flex h-[18px]"><Radio label="无" checked /><Radio label="边" /></div>
                <div className="flex h-[18px]"><Radio label="面" /><Radio label="法线" /></div>
              </fieldset>
            </div>
          </Rollout>
        </div>
        <div className="w-[7px] bg-[#383838] pt-[185px]"><div className="mx-px h-full bg-[#686868]" /></div>
      </div>
    </aside>
  );
}

function Coord({ axis, value }) {
  return (
    <label className="flex items-center">
      <span className="w-[15px] text-center">{axis}:</span>
      <span className="flex h-[18px] w-[68px] items-center bg-[#656565] pr-[3px]">
        <input defaultValue={value} className="min-w-0 flex-1 bg-transparent px-[3px] text-[11px] text-[#dedede]" />
        <SpinArrows />
      </span>
    </label>
  );
}

function StatusBar() {
  return (
    <div className="flex h-[52px] bg-[#444] text-[11px] leading-none text-[#ececec]">
      <div className="w-[99px] shrink-0 pl-px pt-[2px]">
        <div className="h-[22px] border-2 border-[#eee] border-l-[#888] border-t-[#888] bg-[#dcc3c3]" />
        <div className="mt-px flex h-[23px] items-center overflow-hidden whitespace-nowrap border-2 border-[#eee] border-l-[#888] border-t-[#888] bg-white pl-[3px] text-black">
          <span className="text-xs leading-none">欢迎使用</span>
          <span className="ml-[6px] font-['Liberation_Mono',monospace] text-[10px] leading-none">MAXScript</span>
        </div>
      </div>
      <div className="ml-[5px] flex flex-1 flex-col gap-[13px] border-l border-[#1c1c1c] pl-[4px] pt-[10px]">
        <p>选择了 1 个 对象</p>
        <p>单击或单击并拖动以选择对象</p>
      </div>
      <div className="flex w-[896px] shrink-0 flex-col gap-[4px] pt-[5px]">
        <div className="flex h-[19px] items-center">
          <button aria-label="隔离当前选择" className="w-[26px]"><Ic className="mx-auto size-[17px]"><path d="M2 6V2h4M18 2h4v4M22 18v4h-4M6 22H2v-4" strokeWidth="1.500" /><path d="M8 7h8v11H8z" fill={T} stroke="none" /></Ic></button>
          <button aria-label="选择锁定切换" className="w-[27px]"><Ic className="mx-auto size-[17px]"><path d="M7 11V6c0-5 10-5 10 0v5" /><path d="M5 10h14v12H5z" fill={L} /><path d="M12 13v5" stroke="#333" /></Ic></button>
          <button aria-label="绝对模式变换输入" className="w-[27px]"><Ic className="mx-auto size-[17px]"><path d="M3 2h18v20H3z" strokeWidth="1.500" /><circle cx="12" cy="12" r="4" /><path d="M12 3v5M12 16v5M4 12h4M16 12h4" /></Ic></button>
          <Coord axis="X" value="-0.004mm" />
          <Coord axis="Y" value="5.117mm" />
          <Coord axis="Z" value="20.0mm" />
          <span className="ml-[6px]">栅格 = 10.0mm</span>
        </div>
        <button className="ml-[309px] flex h-5 items-center gap-[6px] self-start">
          <span className="flex h-5 w-[22px] items-center justify-center rounded-[3px] bg-[#5a86c8]"><Ic className="size-4"><path d="M12 2l9 5v10l-9 5-9-5V7zM3 7l9 5 9-5M12 12v10" stroke="#26364c" fill="#b9c3d3" strokeWidth="1.500" /></Ic></span>
          添加时间标记
        </button>
      </div>
    </div>
  );
}

const apps = [
  { n: "Cortana", g: <circle cx="14" cy="14" r="7.500" stroke="#fff" strokeWidth="2.400" fill="none" /> },
  { n: "任务视图", g: <g stroke="#fff" strokeWidth="1.500" fill="none"><path d="M5 5v3h12V5M5 23v-3h12v3M5 11h12v6H5zM21 5v4M21 13v10" /><path d="M21 9v3" strokeWidth="2.500" /></g> },
  { n: "Edge", g: <g><circle cx="14" cy="14" r="12.500" fill="#1683d2" /><path d="M2 12C4 3 13 0 20 3c6 4 8 10 5 13-3 4-9 2-8-1 2-3-1-6-5-6-5 0-8 3-10 3z" fill="#3fcf9e" /><path d="M10 11c-5 6 0 15 8 15 4-1 5-3 6-5-5 4-15 1-11-8z" fill="#0b4a99" /></g> },
  { n: "文件资源管理器", u: 1, g: <g><path d="M2 3h9l2 3h13v19H2z" fill="#f6c23d" /><path d="M2 8h24v17H2z" fill="#ffd868" /><path d="M7 26v-10h14v10h-4v-5h-6v5z" fill="#3a95d8" /></g> },
  { n: "截图工具", g: <g><ellipse cx="13" cy="10" rx="11" ry="8" fill="#efe6e6" stroke="#c04040" strokeWidth="1.500" /><path d="M16 4l1 16M22 6l-9 13" stroke="#8a9aa5" strokeWidth="1.500" /><circle cx="14" cy="21" r="3" fill="none" stroke="#3aa0c0" strokeWidth="2" /><circle cx="21" cy="20" r="3" fill="none" stroke="#3aa0c0" strokeWidth="2" /></g> },
  { n: "画图", u: 1, g: <g><path d="M3 17C3 8 12 4 19 7c6 4 3 9 0 10-4 1 1 7-5 8S3 24 3 17z" fill="#c9d9e2" /><circle cx="9" cy="14" r="2" fill="#d33" /><circle cx="14" cy="11" r="2" fill="#3a3" /><circle cx="8" cy="19" r="2" fill="#36c" /><path d="M15 19 24 4" stroke="#d79032" strokeWidth="3" /></g> },
  { n: "Firefox", g: <g><path d="M14 3c3-1 3-2 3-3 7 5 10 9 9 16-1 7-6 11-12 11S3 22 3 15c0-4 1-7 3-9l2 2c2-1 4-3 6-5z" fill="#ff7a1e" /><path d="M17 1c7 5 10 9 8 16-3 5-8 4-7-1 1-4-3-6-3-9 0-2 2-4 2-6z" fill="#ffc42e" /><circle cx="13" cy="16" r="5" fill="#8a3bd0" /><path d="M5 9c2 5 6 3 9 6-3 4-9 2-9-6z" fill="#ff5a2a" /></g> },
  { n: "CAD", u: 1, g: <g><path d="M3 2h22v24H3z" fill="#eef3fa" stroke="#4d6fae" strokeWidth="2" /><path d="M5 17C12 17 18 10 19 4" stroke="#2458b0" strokeWidth="3" fill="none" /><path d="M10 24c8-3 12-9 13-14" stroke="#f0a020" strokeWidth="3" fill="none" /></g> },
  { n: "视频", u: 1, g: <g><rect x="2" y="1" width="24" height="26" rx="4" fill="#fff" /><path d="m10 4 9 6-9 6" stroke="#ef2b5d" strokeWidth="4" fill="none" /><path d="M8 14l8 3" stroke="#28c3d6" strokeWidth="5" /><rect x="14" y="15" width="13" height="13" rx="3" fill="#cfe9f7" stroke="#2d83b8" /><path d="m18 18 6 4-6 4z" fill="#2d83b8" /></g> },
  { n: "3ds Max", u: 1, on: 1, g: <g><path d="M2 1h24v26H2z" fill="#d2eceb" /><path d="M9 6c2-3 9-3 9 1 0 3-3 4-5 4 4 0 6 2 5 5-1 4-9 4-9 0" stroke="#0c8285" strokeWidth="3.500" fill="none" /><path d="M15 23h9" stroke="#2a7a80" strokeWidth="2" /></g> },
];

function Taskbar() {
  return (
    <footer className="flex h-10 bg-gradient-to-r from-[#1f2b28] via-[#35361f] to-[#3b3b24]">
      <button aria-label="开始" className="flex w-[49px] shrink-0 items-center justify-center">
        <svg viewBox="0 0 16 16" className="size-4" fill="#fff"><path d="M0 2l7-1v7H0zM8 1l8-1v8H8zM0 9h7v6l-7-1zM8 9h8v7l-8-1z" /></svg>
      </button>
      <label className="flex w-[343px] shrink-0 items-center bg-[#f2f2f2] pb-[2px] pl-[11px]">
        <svg viewBox="0 0 18 18" className="size-[17px]" fill="none" stroke="#222" strokeWidth="1.500" aria-hidden="true"><circle cx="11" cy="7" r="5.500" /><path d="m7 11-6 6" /></svg>
        <input placeholder="在这里输入你要搜索的内容" className="ml-[11px] min-w-0 flex-1 bg-transparent text-sm placeholder:text-[#2b2b2b]" />
      </label>
      {apps.map((a) => (
        <button key={a.n} aria-label={a.n} className={"relative flex w-[49px] shrink-0 items-center justify-center " + (a.on ? "bg-[#62634f]" : "")}>
          <svg viewBox="0 0 28 28" className="size-6" aria-hidden="true">{a.g}</svg>
          {a.u && <span className={"absolute bottom-0 h-[3px] bg-[#76b5e4] " + (a.on ? "w-full" : "w-10")} />}
        </button>
      ))}
    </footer>
  );
}

function SiteBadge() {
  return (
    <a href="#civilcn" className="absolute bottom-0 right-0 flex h-[238px] w-[475px] bg-white pl-[42px] pt-[64px] text-black">
      <svg viewBox="0 0 375 330" className="h-[110px] w-[125px] shrink-0" aria-label="土木工程网">
        <defs>
          <linearGradient id="tower" x2="0" y2="1"><stop stopColor="#17408f" /><stop offset=".5" stopColor="#1c4a9e" /><stop offset="1" stopColor="#4a80c2" /></linearGradient>
        </defs>
        <g transform="translate(-200 -200)">
          <path d="M228 345C250 255 400 190 500 217c80 22 90 85 62 130 14-55-5-85-65-103C400 222 290 260 228 345z" fill="#96c42c" />
          <path d="M222 370c-12 80 42 112 140 104 110-10 180-70 218-138-22 80-102 151-212 175-98 22-168-20-160-100 3-16 8-28 14-41z" fill="#123a8c" />
          <path d="M230 392l58-28v90c-30-12-54-36-58-62z" fill="#1c469c" />
          <path d="M316 290 386 258V460H316z" fill="url(#tower)" />
          <path d="M398 262 460 295V325L418 345V450L398 455z" fill="#dcdee2" />
          <path d="M422 350 480 326V416L424 446z" fill="#1c469c" />
          <path d="M494 335 540 352 496 406z" fill="#dfe1e4" />
        </g>
      </svg>
      <span className="flex flex-col whitespace-nowrap pt-[15px] italic">
        <span className="text-[52px] font-black leading-[52px]">土木工程网</span>
        <span className="text-[34px] font-medium leading-[34px]">www.civilcn.com</span>
      </span>
    </a>
  );
}

export default function App() {
  return (
    <div className="relative flex h-screen flex-col overflow-hidden bg-[#444] font-['Noto_Sans','Noto_Sans_CJK_SC',sans-serif]">
      <Header />
      <Toolbar />
      <Ribbon />
      <main className="flex min-h-0 flex-1">
        <div className="flex w-10 shrink-0 flex-col border-r border-[#1c1c1c] bg-[#323232]">
          <span className="mx-[3px] mt-[3px] h-[8px] border-y border-[#161616] bg-[#444]" />
          <button aria-label="播放布局" className="mt-auto ml-[10px] flex h-5 w-5 items-center justify-center rounded-[2px] bg-[#505050]"><span className="border-y-4 border-l-[6px] border-y-transparent border-l-white" /></button>
          <button aria-label="视口布局" className="mb-[2px] ml-[3px] mt-[10px] grid h-[44px] w-9 grid-cols-2 gap-[2px] rounded-[3px] bg-gradient-to-b from-[#55719f] to-[#4684e2] px-[3px] py-2">
            <span className="border border-[#222] bg-[#6c7a90]" /><span className="border border-[#222] bg-[#6c7a90]" /><span className="border border-[#222] bg-[#6c7a90]" /><span className="border border-[#222] bg-[#6c7a90]" />
          </button>
        </div>
        <SceneExplorer />
        <div className="flex min-w-0 flex-1 flex-col">
          <div className="grid min-h-0 flex-1 grid-cols-2 grid-rows-2 gap-x-[6px] gap-y-[5px] pb-px pl-1 pt-1">
            <TopView />
            <FrontView />
            <LeftView />
            <PerspectiveView />
          </div>
          <TimeControls />
        </div>
        <CommandPanel />
      </main>
      <StatusBar />
      <Taskbar />
      <SiteBadge />
    </div>
  );
}
